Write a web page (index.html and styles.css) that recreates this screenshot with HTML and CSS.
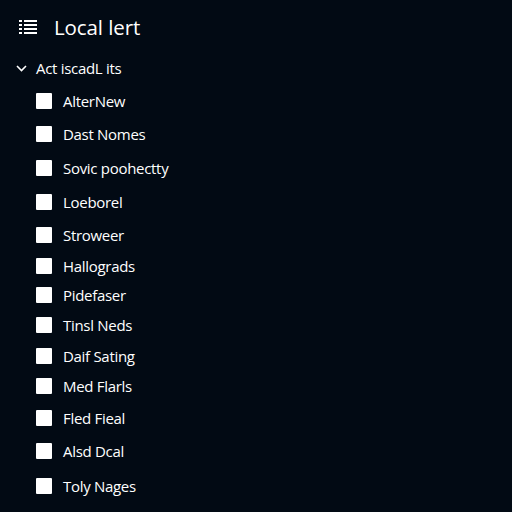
FILE: index.html
```html
<!DOCTYPE html>
<html>
<head>
<meta charset="utf-8">
<link rel="stylesheet" href="styles.css">
</head>
<body>
<div class="panel">
  <div class="header">
    <svg class="list-icon" width="18" height="16" viewBox="0 0 18 16">
      <rect x="0" y="1" width="3" height="2" fill="#fff"/>
      <rect x="5" y="1" width="13" height="2" fill="#fff"/>
      <rect x="0" y="5" width="3" height="2" fill="#fff"/>
      <rect x="5" y="5" width="13" height="2" fill="#fff"/>
      <rect x="0" y="9" width="3" height="2" fill="#fff"/>
      <rect x="5" y="9" width="13" height="2" fill="#fff"/>
      <rect x="0" y="13" width="3" height="2" fill="#fff"/>
      <rect x="5" y="13" width="13" height="2" fill="#fff"/>
    </svg>
    <span class="title">Local lert</span>
  </div>
  <div class="section">
    <svg class="chev" width="11" height="7" viewBox="0 0 11 7"><path d="M1 1 L5.5 5.5 L10 1" stroke="#fff" stroke-width="1.6" fill="none"/></svg>
    <span class="section-label">Act iscadL its</span>
  </div>
  <ul class="items">
    <li class="item"><span class="box"></span><span>AlterNew</span></li>
    <li class="item"><span class="box"></span><span>Dast Nomes</span></li>
    <li class="item"><span class="box"></span><span>Sovic poohectty</span></li>
    <li class="item"><span class="box"></span><span>Loeborel</span></li>
    <li class="item"><span class="box"></span><span>Stroweer</span></li>
    <li class="item"><span class="box"></span><span>Hallograds</span></li>
    <li class="item"><span class="box"></span><span>Pidefaser</span></li>
    <li class="item"><span class="box"></span><span>Tinsl Neds</span></li>
    <li class="item"><span class="box"></span><span>Daif Sating</span></li>
    <li class="item"><span class="box"></span><span>Med Flarls</span></li>
    <li class="item"><span class="box"></span><span>Fled Fieal</span></li>
    <li class="item"><span class="box"></span><span>Alsd Dcal</span></li>
    <li class="item"><span class="box"></span><span>Toly Nages</span></li>
  </ul>
</div>
</body>
</html>
```
FILE: styles.css
```css
html, body {
  margin: 0;
  padding: 0;
  background: #020a14;
  width: 512px;
  height: 512px;
  overflow: hidden;
}
.panel {
  font-family: "Open Sans", "Noto Sans", sans-serif;
  color: #ffffff;
}
.header {
  display: flex;
  align-items: center;
  height: 28px;
  padding: 13px 0 0 19px;
}
.list-icon {
  display: block;
}
.title {
  font-size: 20.5px;
  margin-left: 17px;
  letter-spacing: -0.1px;
}
.section {
  display: flex;
  align-items: center;
  height: 28px;
  margin-top: 13px;
  padding-left: 16px;
}
.chev {
  display: block;
}
.section-label {
  font-size: 15px;
  margin-left: 9px;
  letter-spacing: -0.3px;
}
.items {
  list-style: none;
  margin: 3px 0 0 0;
  padding: 0 0 0 36px;
}
.item {
  display: flex;
  align-items: center;
  height: 32px;
  font-size: 15px;
  letter-spacing: -0.3px;
}
.item:nth-child(2) { height: 33.5px; }
.item:nth-child(3) { height: 34.5px; }
.item:nth-child(4) { height: 33.5px; }
.item:nth-child(5) { height: 32px; }
.item:nth-child(6) { height: 30px; }
.item:nth-child(7) { height: 29.5px; }
.item:nth-child(8) { height: 30.5px; }
.item:nth-child(9) { height: 30.5px; }
.item:nth-child(10) { height: 30.5px; }
.item:nth-child(11) { height: 32.5px; }
.item:nth-child(12) { height: 34.5px; }
.item:nth-child(13) { height: 35px; }
.box {
  width: 16px;
  height: 16px;
  background: #ffffff;
  border-radius: 1px;
  margin-right: 11px;
  flex: none;
}
```
